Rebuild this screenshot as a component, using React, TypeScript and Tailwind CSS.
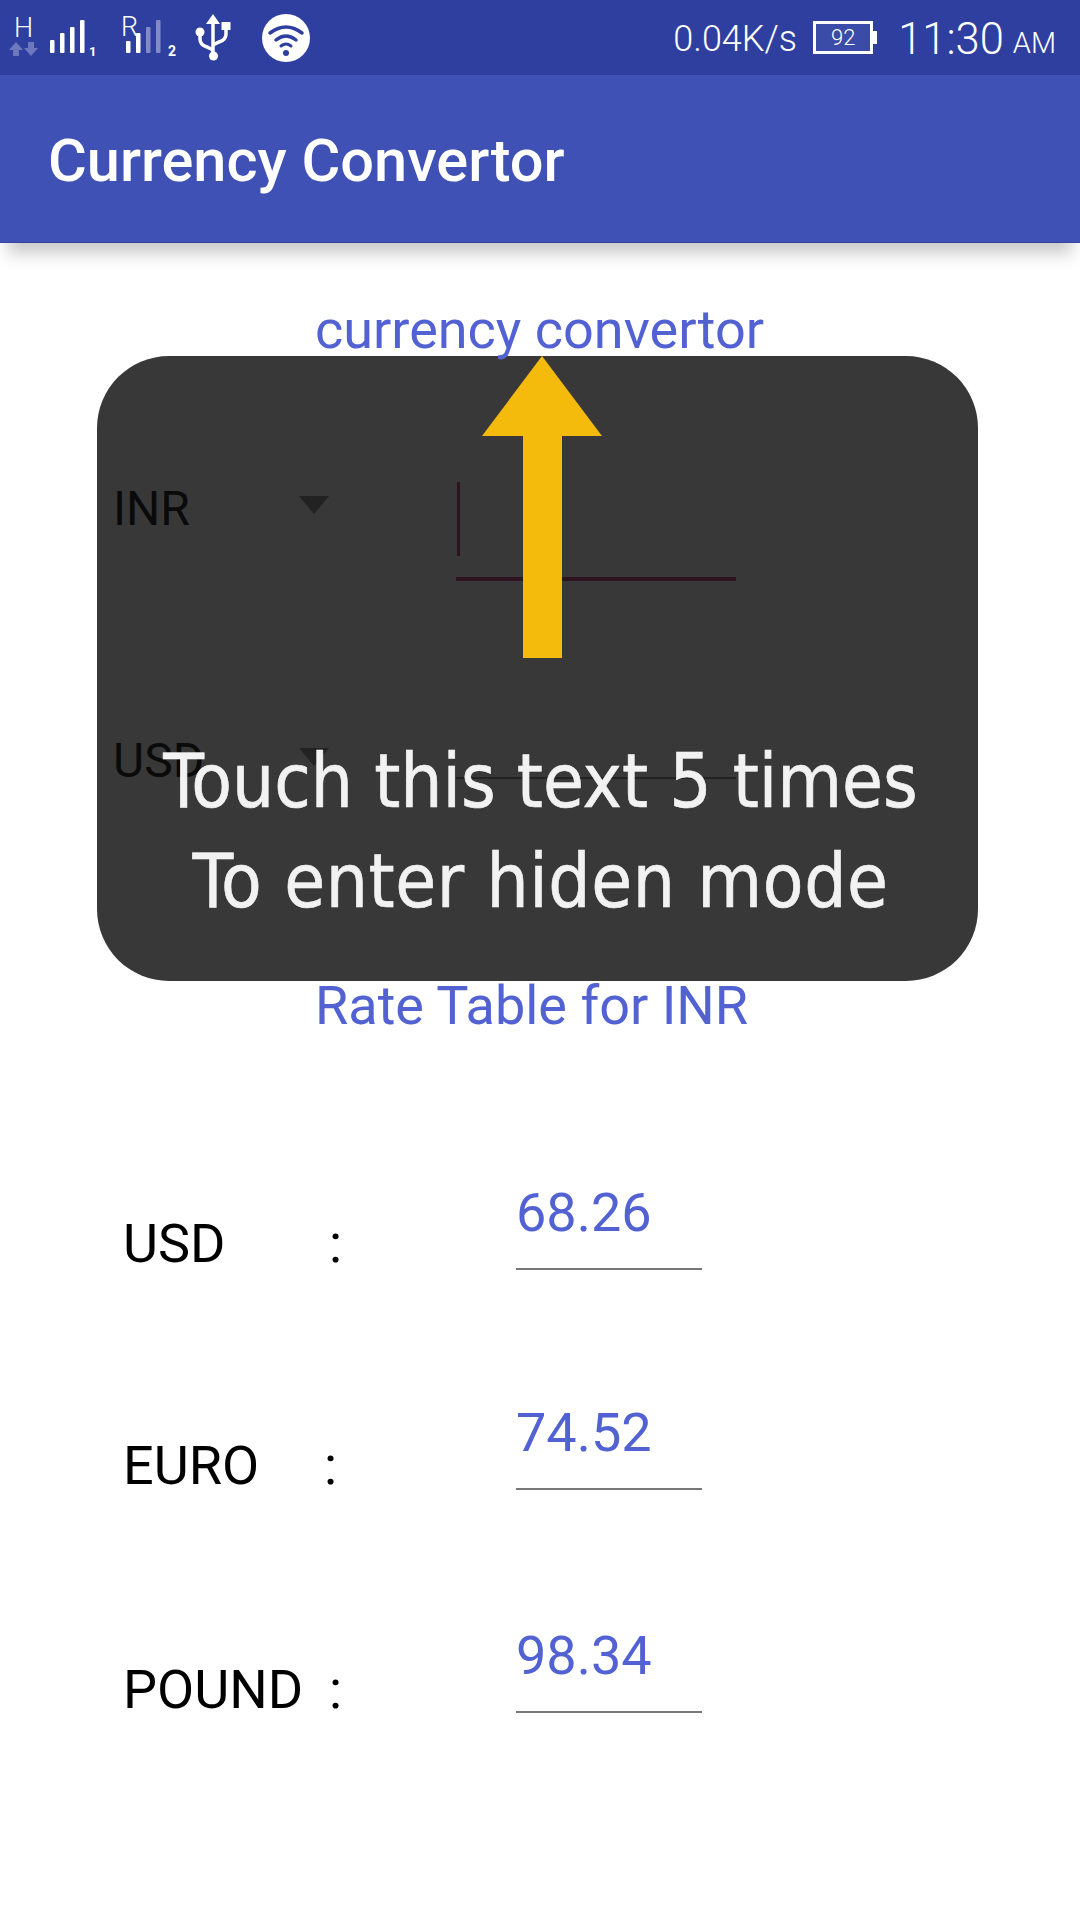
import React from "react";

function StatusLeft() {
  return (
    <svg width="320" height="75" viewBox="0 0 320 75" className="block">
      <text x="14" y="37" fontSize="27" fill="#fff" fontFamily="Roboto, sans-serif" fontWeight="300">H</text>
      <path d="M16 42 l7 8 h-4 v6 h-6 v-6 h-4 z M31 56 l7 -8 h-4 v-6 h-6 v6 h-4 z" fill="#fff" opacity="0.3" />
      <g fill="#fff">
        <rect x="50" y="40" width="4.500" height="13" rx="1" />
        <rect x="60" y="33" width="4.500" height="20" rx="1" />
        <rect x="70" y="27" width="4.500" height="26" rx="1" />
        <rect x="80" y="20" width="4.500" height="33" rx="1" />
        <rect x="126" y="41" width="4.500" height="12" rx="1" />
        <rect x="136" y="33" width="4.500" height="20" rx="1" />
      </g>
      <rect x="146" y="27" width="4.500" height="26" rx="1" fill="#fff" opacity="0.4" />
      <rect x="156" y="20" width="4.500" height="33" rx="1" fill="#fff" opacity="0.4" />
      <text x="89" y="56" fontSize="13" fontWeight="700" fill="#fff" fontFamily="Roboto, sans-serif">1</text>
      <text x="121" y="36" fontSize="27" fontWeight="300" fill="#fff" fontFamily="Roboto, sans-serif">R</text>
      <text x="168" y="56" fontSize="14" fontWeight="700" fill="#fff" fontFamily="Roboto, sans-serif">2</text>
      <g fill="none" stroke="#fff" strokeWidth="3.500">
        <path d="M213 24 V55" />
        <path d="M200 33 V39 Q200 45 207 47 L213 50" />
        <path d="M226 26 V34 Q226 40 219 42 L213 45" />
      </g>
      <path d="M213 14 l7 10 h-14 z" fill="#fff" />
      <circle cx="213.500" cy="56" r="4.500" fill="#fff" />
      <circle cx="200" cy="32" r="4.500" fill="#fff" />
      <rect x="221.500" y="22" width="9" height="8" fill="#fff" />
      <circle cx="286" cy="38" r="24" fill="#fff" />
      <g fill="none" stroke="#2f3f9f" strokeWidth="3.500" strokeLinecap="round">
        <path d="M270 33 Q286 21 302 33" />
        <path d="M276 40 Q286 32 296 40" />
      </g>
      <circle cx="286" cy="53" r="3" fill="#2f3f9f" />
      <path d="M281 46 Q286 42 291 46" fill="none" stroke="#2f3f9f" strokeWidth="3" strokeLinecap="round" />
    </svg>
  );
}

function Spinner({ label, line, lineTop, cursor }: { label: string; line: string; lineTop: string; cursor?: boolean }) {
  return (
    <div className="flex h-[100px] items-center">
      <span className="mt-[6px] w-[202px] pl-[16px] text-[48px] leading-none text-[#0a0a0a]">{label}</span>
      <svg width="30" height="18" viewBox="0 0 30 18" className="mb-[2px]">
        <path d="M0 0 H30 L15 18 Z" fill="#222" />
      </svg>
      <div className="relative ml-[127px] h-[100px] w-[280px]">
        {cursor && <div className="absolute left-[1px] top-[26px] h-[74px] w-[3px] bg-[#2e141e]" />}
        <div className={`absolute left-0 right-0 ${lineTop} ${line}`} />
      </div>
    </div>
  );
}

const rows = [
  { label: "USD", w: "w-[207px]", colon: "w-[185px]", pad: "pt-[44px]", value: "68.26", mt: "mt-[132px]" },
  { label: "EURO", w: "w-[202px]", colon: "w-[190px]", pad: "pt-[46px]", value: "74.52", mt: "mt-[120px]" },
  { label: "POUND", w: "w-[207px]", colon: "w-[185px]", pad: "pt-[47px]", value: "98.34", mt: "mt-[123px]" },
];

export default function App() {
  return (
    <div className="relative h-[1920px] w-[1080px] overflow-hidden bg-white font-['Roboto',sans-serif]">
      <div className="flex h-[75px] items-center justify-between bg-[#2f3f9f] pr-[24px] text-white">
        <StatusLeft />
        <div className="flex items-center">
          <span className="mt-[2px] text-[36px] font-light leading-none">0.04K/s</span>
          <div className="ml-[16px] flex items-center">
            <div className="flex h-[33px] w-[60px] items-center justify-center border-[3px] border-white bg-[#3b4ca8] text-[22px] font-light leading-none">92</div>
            <div className="h-[13px] w-[4px] bg-white" />
          </div>
          <span className="ml-[21px] mt-[4px] text-[43.5px] font-light leading-none">11:30</span>
          <span className="ml-[9px] mt-[12px] text-[29px] font-light leading-none">AM</span>
        </div>
      </div>
      <div className="relative z-10 flex h-[168px] items-center border-b border-[#36469f] bg-[#3f51b5] pl-[48px] shadow-[0_18px_16px_-8px_rgba(0,0,0,0.22)]">
        <h1 className="mt-[7px] text-[59.5px] font-medium leading-none text-white">Currency Convertor</h1>
      </div>

      <div className="relative">
        <p className="relative z-[1] pl-[315px] pt-[55px] text-[54px] leading-[64px] text-[#5262d2]">currency convertor</p>

        <div className="relative mt-[-6px] h-[625px]">
          <div className="absolute left-[97px] top-0 h-[625px] w-[881px] rounded-[72px] bg-[#383838]" />
          <div className="relative pl-[97px] pt-[100px]">
            <Spinner label="INR" line="h-[4px] bg-[#2e141e]" lineTop="top-[121px]" cursor />
            <div className="mt-[152px]">
              <Spinner label="USD" line="h-[2px] bg-[#222]" lineTop="top-[69px]" />
            </div>
          </div>
          <svg width="120" height="304" viewBox="0 0 120 304" className="absolute left-[482px] top-0">
            <path d="M60 0 L120 80 H80 V302 H41 V80 H0 Z" fill="#f4bb0c" />
          </svg>
          <div className="absolute left-[100px] top-[375px] w-[881px] text-center font-['DejaVu_Sans',sans-serif] text-[74px] leading-[100px] text-[#f2f2f2] [-webkit-text-stroke:0.6px_#f2f2f2] [font-stretch:condensed]">
            <div>Touch this text 5 times</div>
            <div className="tracking-[0.6px]">To enter hiden mode</div>
          </div>
        </div>

        <p className="relative z-[1] mt-[-7px] pl-[315px] text-[54px] leading-[64px] text-[#5262d2]">Rate Table for INR</p>

        {rows.map((r) => (
          <div key={r.label} className={`flex h-[100px] pl-[123px] ${r.mt}`}>
            <span className={`${r.w} ${r.pad} text-[54px] leading-[60px] text-black`}>{r.label}</span>
            <span className={`${r.colon} ${r.pad} ml-[-1px] text-[54px] leading-[60px] text-black`}>:</span>
            <div className="ml-[2px] h-[100px] w-[186px] border-b-[2px] border-[#777] pt-[11px]">
              <span className="block text-[54px] leading-[64px] text-[#5262d2]">{r.value}</span>
            </div>
          </div>
        ))}
      </div>
    </div>
  );
}
